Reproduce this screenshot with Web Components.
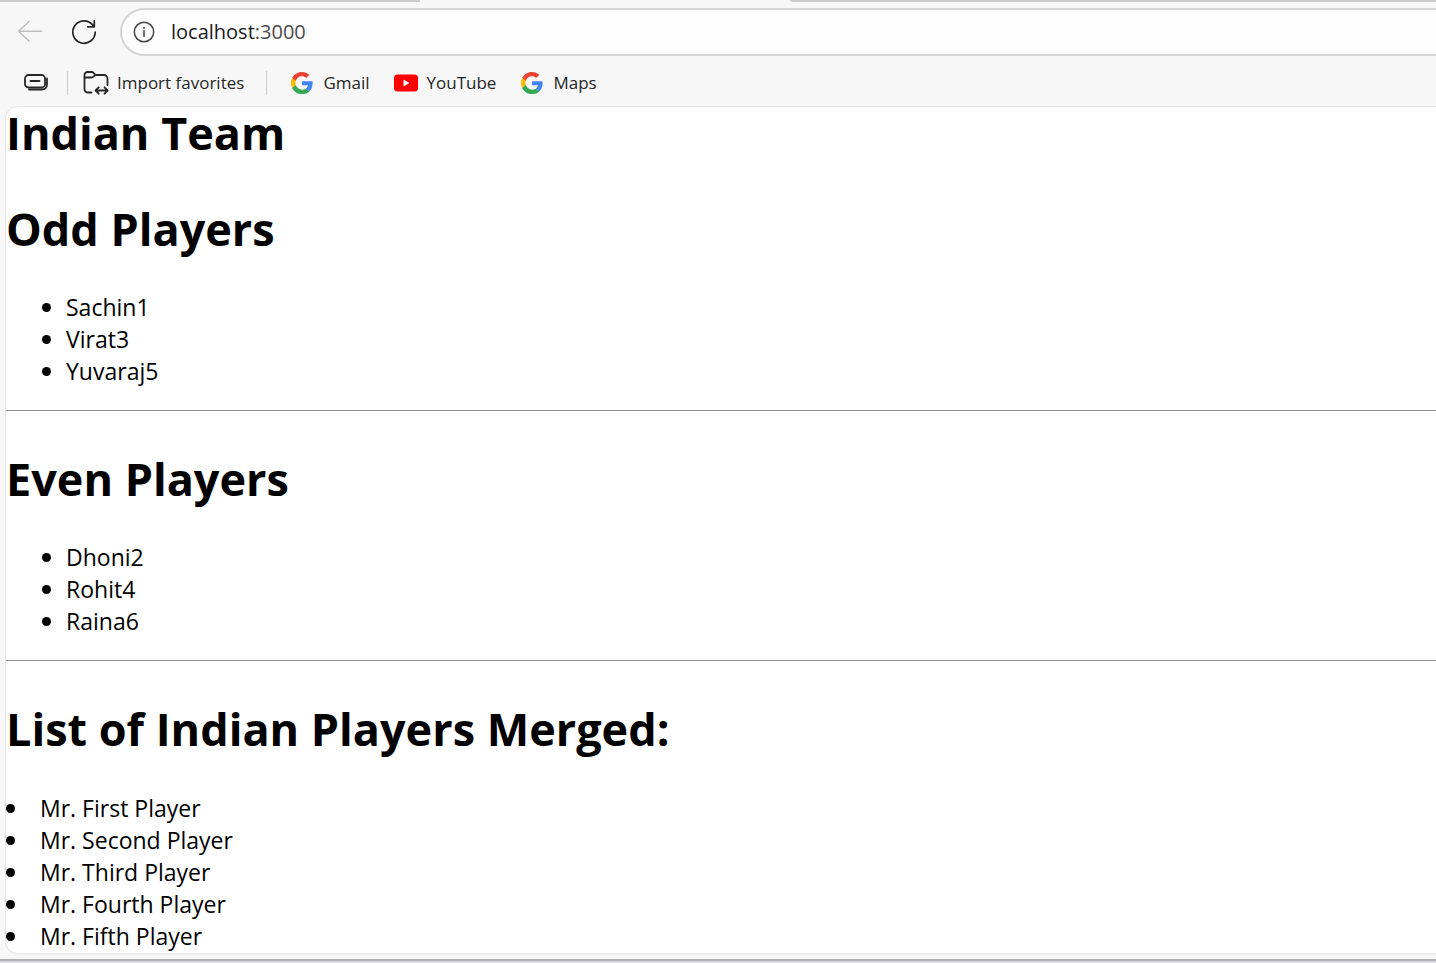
<!DOCTYPE html>
<html lang="en">
<head>
<meta charset="utf-8">
<title>localhost:3000</title>
<style>
  html, body { height: 100%; }
  body { margin: 0; background: #f7f7f7; font-family: "Open Sans", "Noto Sans", sans-serif; color: #000; }
</style>
</head>
<body>
<browser-window>
  <tab-strip slot="chrome"></tab-strip>
  <nav-toolbar slot="chrome" host="localhost" port=":3000"></nav-toolbar>
  <favorites-bar slot="chrome">
    <favorite-link icon="google">Gmail</favorite-link>
    <favorite-link icon="youtube">YouTube</favorite-link>
    <favorite-link icon="google">Maps</favorite-link>
  </favorites-bar>
  <page-heading main-title>Indian Team</page-heading>
  <page-heading>Odd Players</page-heading>
  <player-list players="Sachin1,Virat3,Yuvaraj5"></player-list>
  <page-rule></page-rule>
  <page-heading>Even Players</page-heading>
  <player-list players="Dhoni2,Rohit4,Raina6"></player-list>
  <page-rule></page-rule>
  <page-heading>List of Indian Players Merged:</page-heading>
  <player-list merged players="Mr. First Player,Mr. Second Player,Mr. Third Player,Mr. Fourth Player,Mr. Fifth Player"></player-list>
</browser-window>
<script>
const define = (name, render) => customElements.define(name, class extends HTMLElement {
  connectedCallback() {
    if (!this.shadowRoot) this.attachShadow({ mode: 'open' }).innerHTML = render(this);
  }
});

const icons = {
  google: `<svg width="24" height="24" viewBox="-2 -2 52 52" aria-hidden="true">
    <path fill="#EA4335" d="M24 9.5c3.54 0 6.71 1.22 9.21 3.6l6.85-6.85C35.9 2.38 30.47 0 24 0 14.62 0 6.51 5.38 2.56 13.22l7.98 6.19C12.43 13.72 17.74 9.5 24 9.5z"/>
    <path fill="#4285F4" d="M46.98 24.55c0-1.57-.15-3.09-.38-4.55H24v9.02h12.94c-.58 2.96-2.26 5.48-4.78 7.18l7.73 6c4.51-4.18 7.09-10.36 7.09-17.65z"/>
    <path fill="#FBBC05" d="M10.53 28.59c-.48-1.45-.76-2.99-.76-4.59s.27-3.14.76-4.59l-7.98-6.19C.92 16.46 0 20.12 0 24c0 3.88.92 7.54 2.56 10.78l7.97-6.19z"/>
    <path fill="#34A853" d="M24 48c6.48 0 11.93-2.13 15.89-5.81l-7.73-6c-2.15 1.45-4.92 2.3-8.16 2.3-6.26 0-11.57-4.22-13.47-9.91l-7.98 6.19C6.51 42.62 14.62 48 24 48z"/></svg>`,
  youtube: `<svg width="24" height="24" viewBox="0 0 24 24" aria-hidden="true">
    <rect y="3.5" width="24" height="17" rx="3.5" fill="#f00"/><path d="M9.5 8.6v6.8l6-3.4z" fill="#fff"/></svg>`
};

define('browser-window', () => `
  <style>
    :host { display: flex; flex-direction: column; min-height: 100%; box-sizing: border-box; }
    main { flex: 1; box-sizing: border-box; margin-left: 5px; background: #fff;
      border: solid #e6e6e6; border-width: 1px 0 1px 1px; border-radius: 13px 0 0 13px; }
    footer { height: 4px; margin-top: 5px; flex: none; box-sizing: border-box; border-top: 2px solid #b0b0b2; background: #d8d8de; }
  </style>
  <slot name="chrome"></slot>
  <main><slot></slot></main>
  <footer></footer>`);

define('tab-strip', () => `
  <style>
    :host { display: grid; grid-template-columns: 420px 370px 1fr; height: 2px; }
    .rest { background: #ccc; }
    .rest:first-child { border-bottom-right-radius: 3px; }
    .rest:last-child { border-bottom-left-radius: 3px; }
  </style>
  <div class="rest"></div><div></div><div class="rest"></div>`);

define('nav-toolbar', el => `
  <style>
    :host { display: flex; align-items: center; padding: 6px 0 0 16px; }
    button { border: 0; background: none; padding: 0; width: 28px; height: 28px; margin-right: 26px; flex: none; }
    button:nth-of-type(2) { margin-right: 22px; }
    svg { display: block; }
    form { flex: 1; display: flex; align-items: center; height: 48px; box-sizing: border-box; padding-left: 11px; gap: 14px; margin: 0;
      background: #fdfdfd; border: 2px solid #d4d4d4; border-right: 0; border-radius: 24px 0 0 24px; }
    a { flex: 1; font-size: 20px; line-height: 28px; color: #1b1b1b; text-decoration: none; }
    a span { color: #4a4a4a; }
  </style>
  <button type="button" aria-label="Back" disabled><svg width="28" height="28" viewBox="0 0 28 28" fill="none" stroke="#bebebe" stroke-width="1.5" stroke-linecap="round" stroke-linejoin="round"><path d="M25.5 13.3H2.5M13.3 3.3L2.5 13.3l10.8 10"/></svg></button>
  <button type="button" aria-label="Refresh"><svg width="28" height="28" viewBox="0 0 28 28" fill="none" stroke="#222" stroke-width="1.7" stroke-linecap="round" stroke-linejoin="round"><path d="M25.200 14A11.200 11.200 0 1 1 22.800 7.100l1.200 1.700M24.300 2.800v6h-6.500"/></svg></button>
  <form>
    <svg width="24" height="24" viewBox="0 0 24 24" fill="none" stroke="#444" stroke-width="1.5" aria-hidden="true"><circle cx="11" cy="12" r="9.7"/><path d="M11 10.800v5.700" stroke-linecap="round"/><circle cx="11" cy="7.9" r="1" fill="#444" stroke="none"/></svg>
    <a href="http://localhost:3000">${el.getAttribute('host')}<span>${el.getAttribute('port')}</span></a>
  </form>`);

define('favorites-bar', () => `
  <style>
    :host { display: flex; align-items: center; height: 50px; padding: 4px 0 0 22px; box-sizing: border-box; }
    button { display: flex; align-items: center; gap: 7px; border: 0; background: none; padding: 0; font: 17px/24px "Open Sans", "Noto Sans", sans-serif; color: #262626; white-space: nowrap; }
    svg { display: block; fill: none; stroke: #262626; stroke-width: 1.8; stroke-linecap: round; stroke-linejoin: round; }
    i { width: 1px; height: 24px; background: #ccc; margin: 0 15px 0 17px; }
    i.wide { margin: 0 23px 0 22px; }
    nav { display: flex; gap: 24px; }
  </style>
  <button type="button" aria-label="Workspaces"><svg width="28" height="24" viewBox="0 0 28 24"><rect x="3" y="4" width="20" height="12.5" rx="3.5"/><path d="M8.500 10h9M25 7.500v6a5 5 0 0 1-5 5H7"/></svg></button>
  <i></i>
  <button type="button"><svg width="27" height="26" viewBox="0 0 27 26"><path d="M8.500 22.500H4.500a3 3 0 0 1-3-3V5a3 3 0 0 1 3-3h4.300a2 2 0 0 1 1.500.700l2.200 2.300H21a3.500 3.500 0 0 1 3.500 3.500V15M1.500 7.500h6.800a3 3 0 0 0 2-.800L12.500 5M13 20.500h11M15.700 17.300L12.500 20.500l3.200 3.200M21.500 17.300l3.200 3.200-3.200 3.200"/></svg>Import favorites</button>
  <i class="wide"></i>
  <nav aria-label="Favorites"><slot></slot></nav>`);

define('favorite-link', el => `
  <style>
    :host { display: block; }
    a { display: flex; align-items: center; gap: 9px; font-size: 17px; line-height: 24px; color: #262626; text-decoration: none; }
    svg { display: block; }
  </style>
  <a href="#">${icons[el.getAttribute('icon')]}<slot></slot></a>`);

define('page-heading', () => `
  <style>
    :host { display: block; margin-bottom: 36px; }
    :host([main-title]) { margin-bottom: 44px; }
    h1 { margin: 0; font-size: 45px; line-height: 52px; font-weight: 700; }
  </style>
  <h1><slot></slot></h1>`);

define('page-rule', () => `
  <style>
    :host { display: block; padding: 23px 0 42px; }
    hr { margin: 0; border: 0; height: 1px; background: #909090; }
  </style>
  <hr>`);

define('player-list', el => `
  <style>
    :host { display: block; }
    ul { margin: 0; padding: 0 0 0 36px; list-style: none; }
    li { display: flex; align-items: center; gap: 15px; font-size: 23px; line-height: 32px; }
    li::before { content: ""; width: 9px; height: 9px; border-radius: 50%; background: #000; }
    :host([merged]) ul { padding: 1px 0 0; }
    :host([merged]) li { gap: 25px; }
  </style>
  <ul>${el.getAttribute('players').split(',').map(p => `<li>${p}</li>`).join('')}</ul>`);
</script>
</body>
</html>
